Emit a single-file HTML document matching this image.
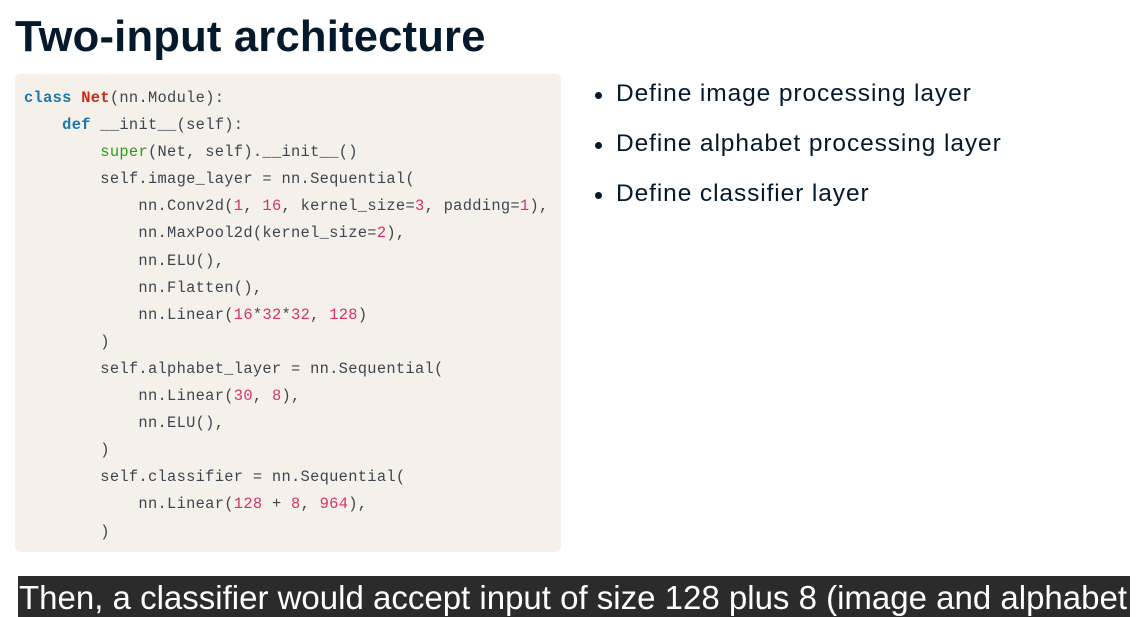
<!DOCTYPE html>
<html><head><meta charset="utf-8"><style>
body{margin:0;width:1136px;height:617px;background:#fff;position:relative;overflow:hidden;font-family:"Liberation Sans",sans-serif;color:#05192d}
h1{position:absolute;left:15px;top:9px;margin:0;font-size:44px;font-weight:bold;letter-spacing:0.2px;line-height:56px;transform:scaleX(0.99);transform-origin:left}
.code{position:absolute;left:15px;top:74px;width:546px;height:478px;background:#f5f1ea;border-radius:5px}
pre{margin:0;position:absolute;left:24px;top:85px;font-family:"Liberation Mono",monospace;font-size:15.4px;letter-spacing:0.3px;line-height:27.1px;color:#3c4650}
.k{color:#1a78b0;font-weight:bold}.c{color:#c42a14;font-weight:bold}.g{color:#2a9a1e}.n{color:#d4336a}
ul{position:absolute;left:596px;top:78px;margin:0;padding:0;list-style:none;font-size:24.5px;letter-spacing:0.9px}
li{height:50px;line-height:32px;position:relative;padding-left:20px}
li:before{content:"";position:absolute;left:-1px;top:14px;width:7px;height:7px;border-radius:50%;background:#05192d}
.cap{position:absolute;left:18px;top:576px;width:1112px;height:41px;background:#2b2b2b;color:#fff;font-size:33px;line-height:44px;white-space:nowrap;overflow:hidden}
.cap span{display:inline-block;padding-left:1px}
</style></head><body>
<h1>Two-input architecture</h1>
<div class="code"></div>
<pre><span class="k">class</span> <span class="c">Net</span>(nn.Module):
    <span class="k">def</span> __init__(self):
        <span class="g">super</span>(Net, self).__init__()
        self.image_layer = nn.Sequential(
            nn.Conv2d(<span class="n">1</span>, <span class="n">16</span>, kernel_size=<span class="n">3</span>, padding=<span class="n">1</span>),
            nn.MaxPool2d(kernel_size=<span class="n">2</span>),
            nn.ELU(),
            nn.Flatten(),
            nn.Linear(<span class="n">16</span>*<span class="n">32</span>*<span class="n">32</span>, <span class="n">128</span>)
        )
        self.alphabet_layer = nn.Sequential(
            nn.Linear(<span class="n">30</span>, <span class="n">8</span>),
            nn.ELU(),
        )
        self.classifier = nn.Sequential(
            nn.Linear(<span class="n">128</span> + <span class="n">8</span>, <span class="n">964</span>),
        )</pre>
<ul><li>Define image processing layer</li><li>Define alphabet processing layer</li><li>Define classifier layer</li></ul>
<div class="cap"><span>Then, a classifier would accept input of size 128 plus 8 (image and alphabet</span></div>
</body></html>
